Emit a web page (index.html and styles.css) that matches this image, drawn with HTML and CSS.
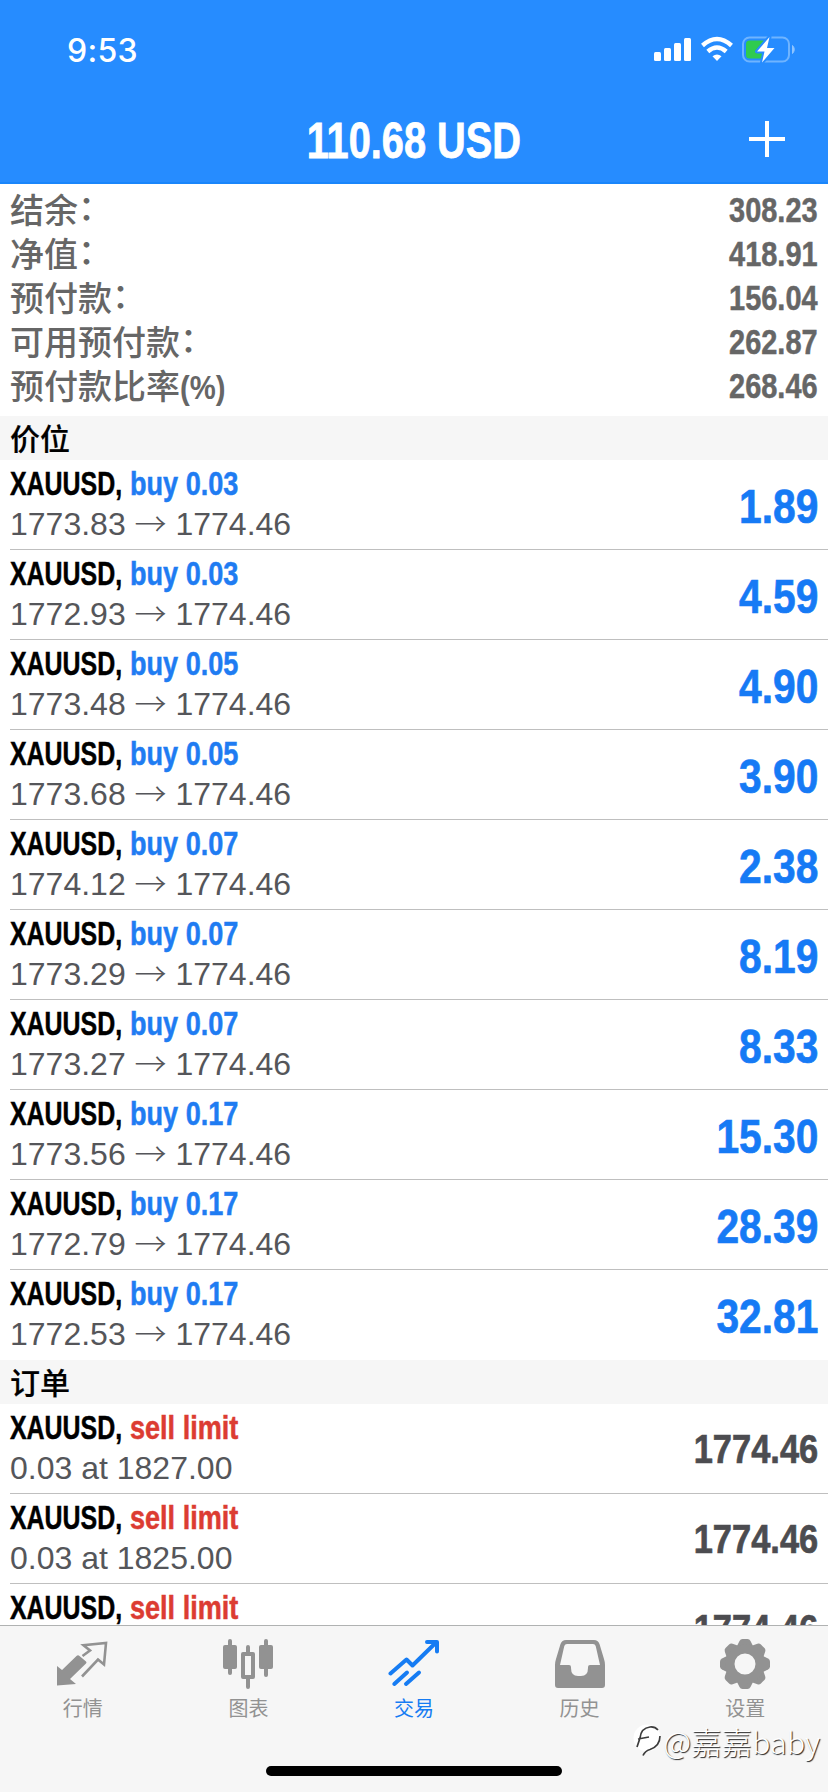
FILE: index.html
```
<!DOCTYPE html>
<html lang="zh-CN">

<head>
    <meta charset="UTF-8">
    <meta name="viewport" content="width=device-width, initial-scale=1.0">
    <title>交易</title>
    <link rel="stylesheet" href="styles.css">
</head>

<body>
    <div class="app">
        <header class="header">
            <div class="status-bar">
                <span class="time">9:53</span>
                <svg class="status-icons" width="144" height="30" viewBox="0 0 144 30">
                    <!-- signal -->
                    <g fill="#fff">
                        <rect x="1" y="17" width="7" height="9" rx="1.5" />
                        <rect x="11" y="13" width="7" height="13" rx="1.5" />
                        <rect x="21" y="8" width="7" height="18" rx="1.5" />
                        <rect x="31" y="3" width="7" height="23" rx="1.5" />
                    </g>
                    <!-- wifi -->
                    <g fill="none" stroke="#fff" stroke-width="4.4">
                        <path d="M49.500 10.500 Q64 -2.500 78.500 10.500" />
                        <path d="M54.800 16.500 Q64 8.500 73.200 16.500" />
                    </g>
                    <path d="M59.500 21.300 Q64 17.700 68.500 21.300 L64 26 Z" fill="#fff" />
                    <!-- battery -->
                    <rect x="90" y="2.500" width="46" height="24" rx="6.500" fill="none" stroke="#6fb4ff" stroke-width="2" />
                    <path d="M139.500 10.500 Q143 14.500 139.500 18.500 Z" fill="#8ec4ff" stroke="#8ec4ff" />
                    <rect x="93" y="5.500" width="20" height="18" rx="3.500" fill="#2fcb4f" />
                    <path d="M116.500 2 L104 16.500 H111.500 L109 27.500 L121.500 13 H114 Z" fill="#fff" stroke="#268cff" stroke-width="4" paint-order="stroke" stroke-linejoin="round" />
                </svg>
            </div>
            <div class="title-bar">
                <h1>110.68 USD</h1>
                <svg class="add" width="36" height="36" viewBox="0 0 36 36">
                    <path d="M18 0 V36 M0 18 H36" stroke="#fff" stroke-width="4" />
                </svg>
            </div>
        </header>

        <main class="content">
            <div class="summary">
                <div class="summary-row"><span>结余<em>：</em></span><b>308.23</b></div>
                <div class="summary-row"><span>净值<em>：</em></span><b>418.91</b></div>
                <div class="summary-row"><span>预付款<em>：</em></span><b>156.04</b></div>
                <div class="summary-row"><span>可用预付款<em>：</em></span><b>262.87</b></div>
                <div class="summary-row"><span>预付款比率<i>(%)</i></span><b>268.46</b></div>
            </div>

            <h2 class="section-title">价位</h2>
            <div class="list">
                <div class="row">
                    <div>
                        <div class="symbol"><span class="name">XAUUSD,</span> <span class="buy">buy 0.03</span></div>
                        <div class="price">1773.83 <span class="arrow">→</span> 1774.46</div>
                    </div>
                    <div class="profit">1.89</div>
                </div>
                <div class="row">
                    <div>
                        <div class="symbol"><span class="name">XAUUSD,</span> <span class="buy">buy 0.03</span></div>
                        <div class="price">1772.93 <span class="arrow">→</span> 1774.46</div>
                    </div>
                    <div class="profit">4.59</div>
                </div>
                <div class="row">
                    <div>
                        <div class="symbol"><span class="name">XAUUSD,</span> <span class="buy">buy 0.05</span></div>
                        <div class="price">1773.48 <span class="arrow">→</span> 1774.46</div>
                    </div>
                    <div class="profit">4.90</div>
                </div>
                <div class="row">
                    <div>
                        <div class="symbol"><span class="name">XAUUSD,</span> <span class="buy">buy 0.05</span></div>
                        <div class="price">1773.68 <span class="arrow">→</span> 1774.46</div>
                    </div>
                    <div class="profit">3.90</div>
                </div>
                <div class="row">
                    <div>
                        <div class="symbol"><span class="name">XAUUSD,</span> <span class="buy">buy 0.07</span></div>
                        <div class="price">1774.12 <span class="arrow">→</span> 1774.46</div>
                    </div>
                    <div class="profit">2.38</div>
                </div>
                <div class="row">
                    <div>
                        <div class="symbol"><span class="name">XAUUSD,</span> <span class="buy">buy 0.07</span></div>
                        <div class="price">1773.29 <span class="arrow">→</span> 1774.46</div>
                    </div>
                    <div class="profit">8.19</div>
                </div>
                <div class="row">
                    <div>
                        <div class="symbol"><span class="name">XAUUSD,</span> <span class="buy">buy 0.07</span></div>
                        <div class="price">1773.27 <span class="arrow">→</span> 1774.46</div>
                    </div>
                    <div class="profit">8.33</div>
                </div>
                <div class="row">
                    <div>
                        <div class="symbol"><span class="name">XAUUSD,</span> <span class="buy">buy 0.17</span></div>
                        <div class="price">1773.56 <span class="arrow">→</span> 1774.46</div>
                    </div>
                    <div class="profit">15.30</div>
                </div>
                <div class="row">
                    <div>
                        <div class="symbol"><span class="name">XAUUSD,</span> <span class="buy">buy 0.17</span></div>
                        <div class="price">1772.79 <span class="arrow">→</span> 1774.46</div>
                    </div>
                    <div class="profit">28.39</div>
                </div>
                <div class="row">
                    <div>
                        <div class="symbol"><span class="name">XAUUSD,</span> <span class="buy">buy 0.17</span></div>
                        <div class="price">1772.53 <span class="arrow">→</span> 1774.46</div>
                    </div>
                    <div class="profit">32.81</div>
                </div>
            </div>

            <h2 class="section-title">订单</h2>
            <div class="list">
                <div class="row">
                    <div>
                        <div class="symbol"><span class="name">XAUUSD,</span> <span class="sell">sell limit</span></div>
                        <div class="price">0.03 at 1827.00</div>
                    </div>
                    <div class="quote">1774.46</div>
                </div>
                <div class="row">
                    <div>
                        <div class="symbol"><span class="name">XAUUSD,</span> <span class="sell">sell limit</span></div>
                        <div class="price">0.03 at 1825.00</div>
                    </div>
                    <div class="quote">1774.46</div>
                </div>
                <div class="row">
                    <div>
                        <div class="symbol"><span class="name">XAUUSD,</span> <span class="sell">sell limit</span></div>
                    </div>
                    <div class="quote">1774.46</div>
                </div>
            </div>
        </main>

        <footer class="footer">
            <nav class="tabs">
                <a class="tab">
                    <svg width="52" height="52" viewBox="0 0 52 52">
                        <path d="M0 28 L5 32 L19.500 18 Q21 16.500 22.500 18 L29 23.500 Q30 24.500 29 25.500 L13 41 L19 46 L0 47.500 Z" fill="#929292" />
                        <path d="M25.500 18 L33 12.500 L26.500 7.300 L49 5 L47 26.500 L41 21.500 L25 38.500" fill="none" stroke="#929292" stroke-width="2.600" />
                    </svg>
                    <span>行情</span>
                </a>
                <a class="tab">
                    <svg width="52" height="52" viewBox="0 0 52 52">
                        <g fill="#929292">
                            <rect x="1" y="7" width="14" height="24" rx="2" />
                            <rect x="6" y="1" width="4" height="36" rx="2" />
                            <rect x="37" y="7" width="14" height="24" rx="2" />
                            <rect x="42" y="1" width="4" height="38" rx="2" />
                            <path d="M24 9 Q24 7 26 7 Q28 7 28 9 V15 H24 Z M24 40 H28 V49 Q28 51 26 51 Q24 51 24 49 Z" />
                        </g>
                        <rect x="21" y="16" width="10" height="23" fill="none" stroke="#929292" stroke-width="4" stroke-linejoin="round" />
                    </svg>
                    <span>图表</span>
                </a>
                <a class="tab active">
                    <svg width="52" height="52" viewBox="0 0 52 52">
                        <g fill="none" stroke="#167cf3" stroke-width="4" stroke-linecap="round" stroke-linejoin="round">
                            <path d="M2.500 35.500 L18.500 21.500 L24.500 27.500 L47.500 5" />
                            <path d="M39 4 H49 V13.500" />
                            <path d="M6.300 46 L19 34.500" />
                            <path d="M18 46 L31 34.500" />
                        </g>
                    </svg>
                    <span>交易</span>
                </a>
                <a class="tab">
                    <svg width="52" height="52" viewBox="0 0 52 52">
                        <path d="M12 2 H40 Q44 2 45.500 6 L50 21 Q51 24 51 27 V47 Q51 50 48 50 H4 Q1 50 1 47 V27 Q1 24 2 21 L6.500 6 Q8 2 12 2 Z M13 6 Q11 6 10.300 8 L6 27 H15 Q17 27 17 29 V30 Q17 38 24 38 H27 Q34 38 34 30 V29 Q34 27 36 27 H46 L41.700 8 Q41 6 39 6 Z" fill="#929292" fill-rule="evenodd" />
                    </svg>
                    <span>历史</span>
                </a>
                <a class="tab">
                    <svg width="52" height="52" viewBox="0 0 52 52">
                        <defs>
                            <path id="tooth" d="M17.500 9 L20.500 3 Q21.500 1 23.500 1 H28.500 Q30.500 1 31.500 3 L34.500 9 Z" />
                        </defs>
                        <g fill="#929292">
                            <use href="#tooth" />
                            <use href="#tooth" transform="rotate(45 26 26)" />
                            <use href="#tooth" transform="rotate(90 26 26)" />
                            <use href="#tooth" transform="rotate(135 26 26)" />
                            <use href="#tooth" transform="rotate(180 26 26)" />
                            <use href="#tooth" transform="rotate(225 26 26)" />
                            <use href="#tooth" transform="rotate(270 26 26)" />
                            <use href="#tooth" transform="rotate(315 26 26)" />
                        </g>
                        <circle cx="26" cy="26" r="15" fill="none" stroke="#929292" stroke-width="9" />
                    </svg>
                    <span>设置</span>
                </a>
            </nav>
            <div class="home-indicator"></div>
            <div class="watermark">
                <svg width="30" height="34" viewBox="0 0 30 34">
                    <circle cx="14" cy="14" r="13.500" fill="#fff" />
                    <path d="M4 23 L7 14 Q8 4 17 3 Q22 2.500 25 6 M5 15 L16 13 M27 12 Q27 22 17 25.500 Q12 27 10 31.500" fill="none" stroke="#3c3c3c" stroke-width="1.700" />
                </svg>
                <span>@嘉嘉baby</span>
            </div>
        </footer>
    </div>
</body>

</html>
```
FILE: styles.css
```
* {
    box-sizing: border-box;
}

body {
    margin: 0;
    background-color: #fff;
    font-family: "Liberation Sans", "Noto Sans CJK SC", sans-serif;
}

.app {
    display: flex;
    flex-direction: column;
    height: 1792px;
    overflow: hidden;
}

/* Header */
.header {
    flex: none;
    height: 184px;
    background-color: #268cff;
    border-bottom: 2px solid #1a86fb;
    color: #fff;
}

.status-bar {
    display: flex;
    justify-content: space-between;
    align-items: center;
    height: 100px;
    padding: 0 31px 0 67px;
}

.time {
    font-family: Inter, sans-serif;
    font-size: 32px;
    font-weight: 500;
    letter-spacing: 0.3px;
}

.title-bar {
    display: grid;
    grid-template-columns: 1fr auto 1fr;
    align-items: center;
    height: 82px;
    padding: 0 43px;
}

.title-bar h1 {
    grid-column: 2;
    margin: 0;
    font-size: 50px;
    line-height: 82px;
    transform: scaleX(0.795); /* condensed look */
    -webkit-text-stroke: 0.8px #fff;
}

.add {
    justify-self: end;
    margin-bottom: 4px;
}

/* Account summary */
.content {
    flex: 1;
    min-height: 0;
    overflow: hidden;
}

.summary {
    height: 232px;
    padding: 3px 10px 8px 10px;
    color: #666;
}

.summary-row {
    display: flex;
    justify-content: space-between;
    height: 44px;
    line-height: 44px;
    font-size: 34px;
}

.summary-row span {
    font-family: "Noto Sans CJK SC", sans-serif;
    font-weight: 500;
}

.summary-row em {
    font-style: normal;
    line-height: 1;
    vertical-align: 3px;
}

.summary-row i,
.summary-row b {
    display: inline-block;
    font-family: "Liberation Sans", sans-serif;
    font-style: normal;
    font-weight: bold;
}

.summary-row i {
    transform: scaleX(0.86);
    transform-origin: left;
}

.summary-row b {
    font-size: 35.5px;
    line-height: 46px;
    transform: scaleX(0.815);
    transform-origin: right;
    -webkit-text-stroke: 0.5px #666;
}

.section-title {
    height: 44px;
    margin: 0;
    padding-left: 10px;
    background-color: #f6f6f6;
    color: #000;
    font-family: "Noto Sans CJK SC", sans-serif;
    font-size: 30px;
    font-weight: 500;
    line-height: 42px;
    -webkit-text-stroke: 0.2px #000;
}

/* Positions and orders */
.row {
    display: flex;
    justify-content: space-between;
    height: 90px;
    margin-left: 10px;
    padding: 3px 10px 0 0;
    border-bottom: 1px solid #bfbfbf;
}

.row:last-child {
    border-bottom: none;
}

.symbol {
    height: 40px;
    font-size: 33px;
    font-weight: bold;
    line-height: 41px;
    white-space: nowrap;
}

.name,
.buy,
.sell {
    display: inline-block;
    transform: scaleX(0.82);
    transform-origin: left;
    -webkit-text-stroke: 0.5px;
}

.name {
    margin-right: -38px;
    color: #000;
    transform: scaleX(0.755);
}

.buy {
    color: #1f7cf2;
}

.sell {
    color: #dc3c32;
}

.price {
    color: #55565a;
    font-size: 32px;
    line-height: 42px;
}

.arrow {
    font-family: "Noto Sans CJK SC", sans-serif;
    font-weight: 300;
    line-height: 1;
    vertical-align: -1px;
}

.profit,
.quote {
    font-weight: bold;
    transform: scaleX(0.84);
    transform-origin: right;
    -webkit-text-stroke: 0.7px;
}

.profit {
    color: #167af5;
    font-size: 48.5px;
    line-height: 87px;
}

.quote {
    color: #4c4c50;
    font-size: 41px;
    line-height: 85px;
}

/* Tab bar */
.footer {
    position: relative;
    flex: none;
    height: 167px;
    background-color: #f6f6f6;
    border-top: 1px solid #b0b2b2;
}

.tabs {
    display: flex;
    height: 140px;
    padding-top: 12px;
}

.tab {
    display: flex;
    flex: 1;
    flex-direction: column;
    align-items: center;
    color: #929292;
    font-family: "Noto Sans CJK SC", sans-serif;
    font-size: 20px;
    line-height: 36px;
}

.active {
    color: #167cf3;
}

.home-indicator {
    width: 296px;
    height: 10px;
    margin: 0 auto;
    border-radius: 5px;
    background-color: #000;
}

/* User tag in the corner */
.watermark {
    position: absolute;
    right: 8px;
    bottom: 31px;
    display: flex;
    align-items: center;
    color: #fff;
    font-family: "Noto Sans CJK SC", sans-serif;
    font-size: 30.5px;
    font-weight: 300;
    line-height: 40px;
    text-shadow: 1px 1px 1px #222;
}
```
